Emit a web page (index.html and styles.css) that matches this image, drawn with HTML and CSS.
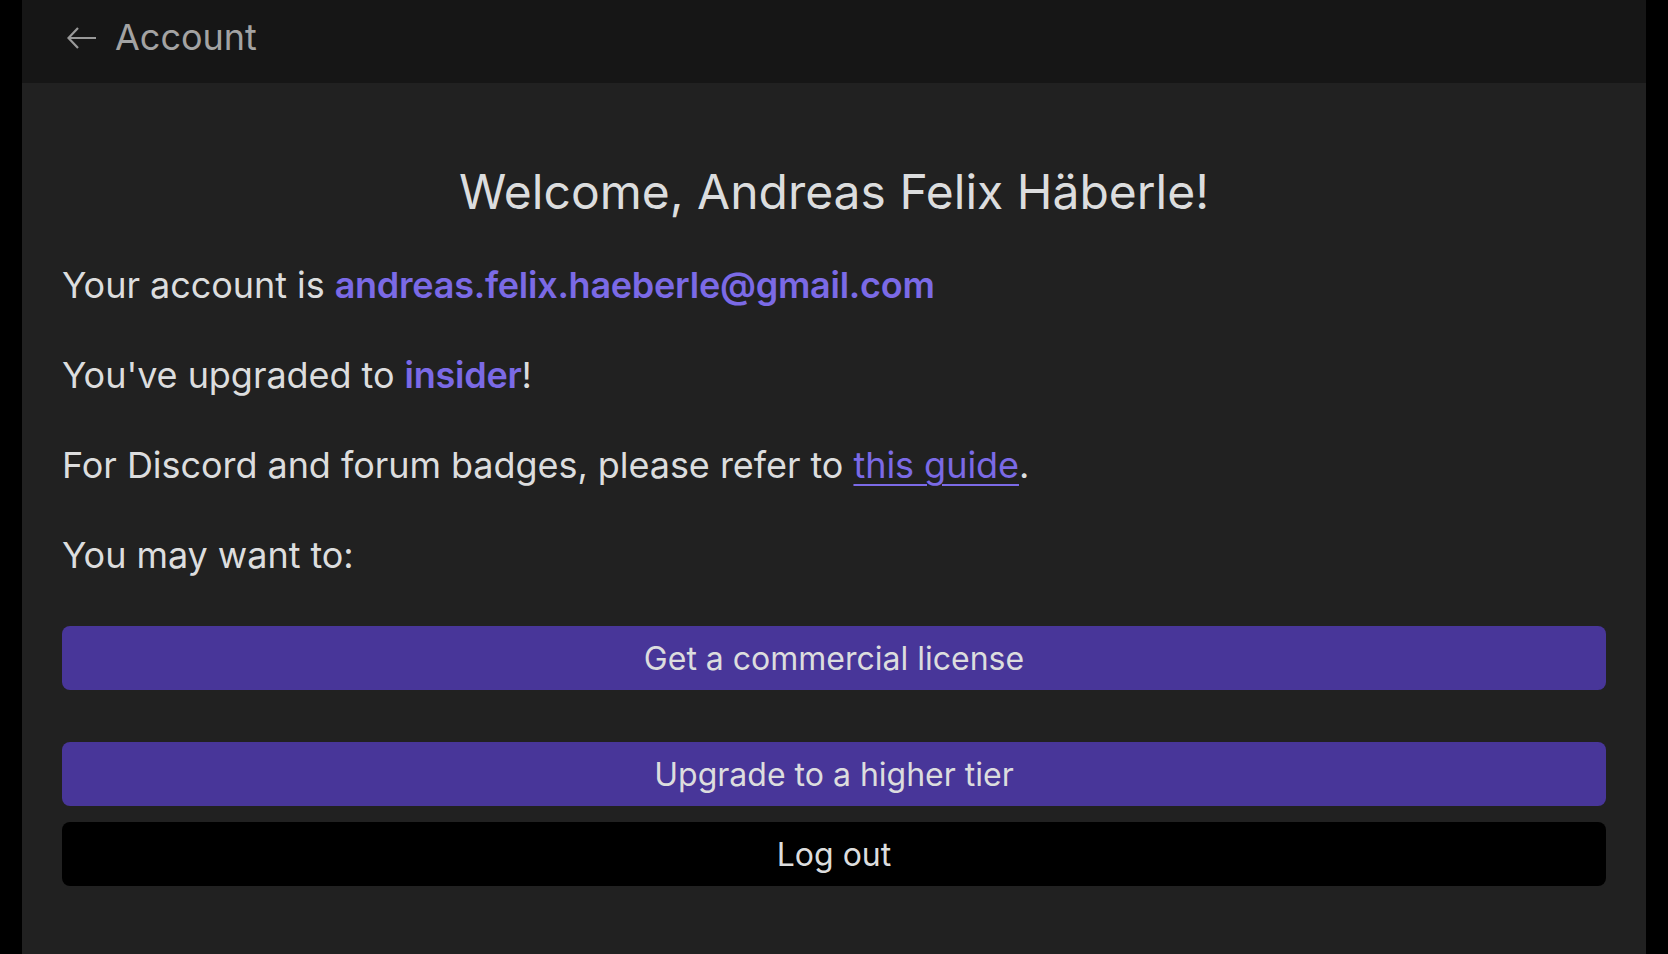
FILE: index.html
```html
<!DOCTYPE html>
<html>
<head>
<meta charset="utf-8">
<link rel="stylesheet" href="styles.css">
</head>
<body>
<div class="panel">
  <header class="topbar">
    <svg class="back" width="30" height="22" viewBox="0 0 30 22"><path d="M29 11H2M11 1L1.5 11 11 21" fill="none" stroke="#999" stroke-width="2.2"/></svg>
    <span class="title">Account</span>
  </header>
  <main class="content">
    <h1 class="welcome">Welcome, Andreas Felix Häberle!</h1>
    <p class="line">Your account is <b class="accent">andreas.felix.haeberle@gmail.com</b></p>
    <p class="line">You've upgraded to <b class="accent">insider</b>!</p>
    <p class="line">For Discord and forum badges, please refer to <a class="link" href="#">this guide</a>.</p>
    <p class="line">You may want to:</p>
    <div class="actions">
      <button class="btn primary first">Get a commercial license</button>
      <button class="btn primary">Upgrade to a higher tier</button>
      <button class="btn dark">Log out</button>
    </div>
  </main>
</div>
</body>
</html>
```
FILE: styles.css
```css
html, body { margin: 0; padding: 0; background: #000; height: 100%; }
body { font-family: Inter, "Noto Sans", sans-serif; color: #dcddde; }
.panel { margin: 0 22px; background: #212121; min-height: 954px; }
.topbar { height: 83px; background: #161616; display: flex; align-items: center; padding-left: 45px; box-sizing: border-box; }
.back { margin-right: 18px; margin-bottom: 8px; }
.title { font-size: 36px; color: #a3a3a3; line-height: 1; margin-bottom: 10px; }
.content { padding: 0 40px; }
.welcome { margin: 0; padding-top: 77px; font-weight: 400; font-size: 48px; line-height: 64px; text-align: center; color: #dcddde; }
.line { margin: 0; font-size: 36px; line-height: 42px; margin-top: 48px; letter-spacing: -0.05px; }
.welcome + .line { margin-top: 40px; }
.accent { color: #7b6ae6; font-weight: 600; letter-spacing: -0.25px; }
.link { color: #7b6ae6; text-decoration: underline; text-underline-offset: 6px; text-decoration-thickness: 2px; }
.actions { display: flex; flex-direction: column; gap: 16px; margin-top: 50px; }
.btn { height: 64px; border: none; border-radius: 8px; font-family: inherit; font-size: 32px; color: #dcddde; width: 100%; cursor: pointer; }
.primary { background: #483699; }
.first { margin-bottom: 36px; }
.dark { background: #000; }
```
